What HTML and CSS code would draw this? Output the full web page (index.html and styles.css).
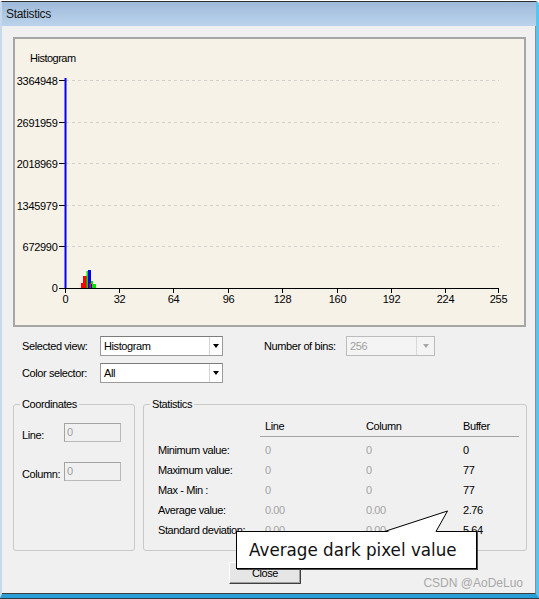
FILE: index.html
```html
<!DOCTYPE html>
<html>
<head>
<meta charset="utf-8">
<title>Statistics</title>
<link rel="stylesheet" href="styles.css">
</head>
<body>
<div class="screen">
  <div class="frame">
    <div class="titlebar">Statistics</div>
    <div class="dialog">
      <div class="chart-panel">
        <svg class="chart" width="509" height="286" viewBox="15 39 509 286">
          <text class="ch-title" x="30" y="62">Histogram</text>
          <g class="grid">
            <line x1="66" y1="80.5" x2="499" y2="80.5"/>
            <line x1="66" y1="122.5" x2="499" y2="122.5"/>
            <line x1="66" y1="163.5" x2="499" y2="163.5"/>
            <line x1="66" y1="205.5" x2="499" y2="205.5"/>
            <line x1="66" y1="246.5" x2="499" y2="246.5"/>
          </g>
          <g class="ticks">
            <line x1="59" y1="80.5" x2="65" y2="80.5"/>
            <line x1="59" y1="122.5" x2="65" y2="122.5"/>
            <line x1="59" y1="163.5" x2="65" y2="163.5"/>
            <line x1="59" y1="205.5" x2="65" y2="205.5"/>
            <line x1="59" y1="246.5" x2="65" y2="246.5"/>
            <line x1="59" y1="288.5" x2="65" y2="288.5"/>
            <line x1="65" y1="288.5" x2="499" y2="288.5"/>
            <line x1="65.5" y1="288" x2="65.5" y2="293"/>
            <line x1="119.5" y1="288" x2="119.5" y2="293"/>
            <line x1="173.5" y1="288" x2="173.5" y2="293"/>
            <line x1="228.5" y1="288" x2="228.5" y2="293"/>
            <line x1="282.5" y1="288" x2="282.5" y2="293"/>
            <line x1="337.5" y1="288" x2="337.5" y2="293"/>
            <line x1="391.5" y1="288" x2="391.5" y2="293"/>
            <line x1="445.5" y1="288" x2="445.5" y2="293"/>
            <line x1="498.5" y1="288" x2="498.5" y2="293"/>
          </g>
          <g class="ylabels">
            <text x="57.5" y="84.5">3364948</text>
            <text x="57.5" y="126.5">2691959</text>
            <text x="57.5" y="167.5">2018969</text>
            <text x="57.5" y="209.5">1345979</text>
            <text x="57.5" y="250.5">672990</text>
            <text x="57.5" y="292">0</text>
          </g>
          <g class="xlabels">
            <text x="65.5" y="303">0</text>
            <text x="119.5" y="303">32</text>
            <text x="173.5" y="303">64</text>
            <text x="228.5" y="303">96</text>
            <text x="282.5" y="303">128</text>
            <text x="337.5" y="303">160</text>
            <text x="391.5" y="303">192</text>
            <text x="445.5" y="303">224</text>
            <text x="498.5" y="303">255</text>
          </g>
          <rect class="bar-b" x="64.5" y="78" width="2" height="210"/>
          <rect class="bar-r" x="81" y="283" width="2" height="5"/>
          <rect class="bar-r" x="83" y="276" width="4" height="12"/>
          <rect class="bar-g" x="86.5" y="271" width="1.5" height="17"/>
          <rect class="bar-b" x="88" y="270" width="3" height="18"/>
          <rect class="bar-r" x="89.5" y="283" width="1.5" height="5"/>
          <rect class="bar-g" x="91" y="281" width="2" height="7"/>
          <rect class="bar-b" x="91" y="284" width="1" height="4"/>
          <rect class="bar-g" x="93" y="284" width="3" height="4"/>
        </svg>
      </div>

      <div class="controls">
        <span class="lbl">Selected view:</span>
        <div class="combo"><span class="combo-text">Histogram</span><span class="combo-btn"><i class="arrow"></i></span></div>
        <span class="spacer"></span>
        <span class="lbl">Number of bins:</span>
        <div class="combo disabled"><span class="combo-text">256</span><span class="combo-btn"><i class="arrow"></i></span></div>
        <span class="lbl">Color selector:</span>
        <div class="combo"><span class="combo-text">All</span><span class="combo-btn"><i class="arrow"></i></span></div>
      </div>

      <div class="groups">
        <fieldset class="group coords">
          <legend>Coordinates</legend>
          <div class="coord-rows">
            <div class="coord-row"><span class="lbl">Line:</span><div class="textbox">0</div></div>
            <div class="coord-row"><span class="lbl">Column:</span><div class="textbox">0</div></div>
          </div>
        </fieldset>
        <fieldset class="group stats">
          <legend>Statistics</legend>
          <div class="stats-grid">
            <span class="hdr blank"></span>
            <span class="hdr">Line</span>
            <span class="hdr">Column</span>
            <span class="hdr">Buffer</span>

            <span class="rl">Minimum value:</span>
            <span class="v dim">0</span>
            <span class="v dim">0</span>
            <span class="v">0</span>

            <span class="rl">Maximum value:</span>
            <span class="v dim">0</span>
            <span class="v dim">0</span>
            <span class="v">77</span>

            <span class="rl">Max - Min :</span>
            <span class="v dim">0</span>
            <span class="v dim">0</span>
            <span class="v">77</span>

            <span class="rl">Average value:</span>
            <span class="v dim">0.00</span>
            <span class="v dim">0.00</span>
            <span class="v">2.76</span>

            <span class="rl">Standard deviation:</span>
            <span class="v dim">0.00</span>
            <span class="v dim">0.00</span>
            <span class="v">5.64</span>
          </div>
        </fieldset>
      </div>

      <div class="buttons"><button class="btn" type="button">Close</button></div>
    </div>
  </div>

  <div class="callout">Average dark pixel value</div>
  <svg class="callout-tail" width="75" height="30" viewBox="380 505 75 30">
    <polygon points="385.5,532.6 447.5,511 435.5,532.6" fill="#fff"/>
    <polyline points="384.5,531.5 447.5,511 436,531.5" fill="none" stroke="#000" stroke-width="1"/>
  </svg>
  <div class="watermark">CSDN @AoDeLuo</div>
</div>
</body>
</html>
```

FILE: styles.css
```css
* { box-sizing: border-box; }

html, body {
  margin: 0;
  padding: 0;
  background: #fff;
}

body {
  font-family: "Liberation Sans", Arial, sans-serif;
  font-size: 11px;
  letter-spacing: -0.4px;
  color: #000;
}

.screen {
  position: relative;
  width: 539px;
  height: 599px;
  padding-top: 1px;
  border-bottom: 1px solid #2d3b46;
  overflow: hidden;
}

.frame {
  height: 597px;
  display: flex;
  flex-direction: column;
  border-top: 1px solid #2e2e2e;
  border-left: 2px solid #c9d9ec;
  border-right: 3px solid #56c5ef;
  border-bottom: 4px solid #2a9fd7;
  border-top-right-radius: 4px;
}

.titlebar {
  flex: none;
  height: 24px;
  line-height: 24px;
  padding-left: 4px;
  background: linear-gradient(#9fbad9, #bbd3ec);
  font-size: 12px;
  letter-spacing: -0.3px;
  color: #141414;
}

.dialog {
  flex: 1;
  background: #f0f0f0;
  border-right: 1px solid #8d8d8d;
  border-bottom: 1px solid #3d3d3d;
  padding: 11px 0 0 11px;
}

/* chart */
.chart-panel {
  width: 513px;
  height: 290px;
  border: 2px solid #a6a6a6;
  background: #f6f2e8;
}

.chart {
  display: block;
}

.chart text {
  font-family: "Liberation Sans", Arial, sans-serif;
  font-size: 11px;
  letter-spacing: -0.3px;
  fill: #000;
}

.chart .ch-title { letter-spacing: -0.5px; }
.chart .ylabels text { text-anchor: end; }
.chart .xlabels text { text-anchor: middle; }

.chart .grid line {
  stroke: #d2d0cb;
  stroke-width: 1;
  stroke-dasharray: 3 3;
  shape-rendering: crispEdges;
}

.chart .ticks line {
  stroke: #000;
  stroke-width: 1;
  shape-rendering: crispEdges;
}

.bar-b { fill: #0000ff; }
.bar-r { fill: #ff0000; }
.bar-g { fill: #00e000; }

/* controls */
.controls {
  display: grid;
  grid-template-columns: 78px 123px 41px 82px 89px;
  grid-template-rows: 20px 20px;
  row-gap: 7px;
  margin: 9px 0 0 9px;
  align-items: center;
}

.lbl {
  white-space: nowrap;
}

.combo {
  display: flex;
  height: 20px;
  background: #fff;
  border: 1px solid #9a9a9a;
  border-top-color: #7c7c7c;
}

.combo-text {
  flex: 1;
  padding-left: 3px;
  line-height: 18px;
}

.combo-btn {
  width: 13px;
  display: flex;
  align-items: center;
  justify-content: center;
  border-left: 1px solid #d4d4d4;
}

.arrow {
  width: 0;
  height: 0;
  border-left: 3.5px solid transparent;
  border-right: 3.5px solid transparent;
  border-top: 4px solid #000;
}

.combo.disabled {
  background: #f4f4f4;
  border-color: #bcbcbc;
}

.combo.disabled .combo-text { color: #a0a0a0; }
.combo.disabled .combo-btn { width: 18px; border-left-color: #d8d8d8; }
.combo.disabled .arrow { border-top-color: #a6a6a6; }

/* group boxes */
.groups {
  display: flex;
  gap: 8px;
  margin-top: 14px;
}

.group {
  margin: 0;
  padding: 0 0 0 6px;
  height: 154px;
  border: 1px solid #c9c9c9;
  border-radius: 3px;
}

.group legend {
  padding: 0 2px;
  line-height: 14px;
}

.coords { width: 122px; }
.stats { width: 384px; }

.coord-rows {
  display: flex;
  flex-direction: column;
  gap: 20px;
  padding: 12px 0 0 2px;
}

.coord-row {
  display: flex;
  height: 19px;
}

.coord-row .lbl {
  width: 42px;
  line-height: 19px;
  padding-top: 3px;
}

.textbox {
  width: 57px;
  height: 19px;
  line-height: 16px;
  padding-left: 2px;
  color: #a0a0a0;
  background: #f0f0f0;
  border: 1px solid #b9b9b9;
  border-top-color: #a2a2a2;
  border-left-color: #a2a2a2;
}

.stats-grid {
  display: grid;
  grid-template-columns: 102px 101px 97px 61px;
  grid-template-rows: 23px;
  grid-auto-rows: 20px;
  padding: 6px 0 0 8px;
}

.hdr {
  height: 20px;
  line-height: 19px;
  padding-left: 5px;
  border-bottom: 1px solid #a4a4a4;
  margin-bottom: 3px;
  align-self: start;
}

.hdr.blank { border-bottom: none; }

.rl {
  line-height: 20px;
  white-space: nowrap;
}

.v {
  line-height: 20px;
  padding-left: 5px;
}

.v.dim { color: #a4a4a4; }

/* button */
.buttons {
  margin: 11px 0 0 216px;
}

.btn {
  display: block;
  width: 72px;
  height: 22px;
  padding: 0;
  font-family: "Liberation Sans", Arial, sans-serif;
  font-size: 11px;
  letter-spacing: -0.4px;
  color: #000;
  background: #e6e6e6;
  border: 1px solid;
  border-color: #fff #404040 #404040 #fff;
  box-shadow: inset -1px -1px 0 #a0a0a0;
}

/* overlays */
.callout {
  position: absolute;
  left: 236px;
  top: 531px;
  width: 241px;
  height: 38px;
  padding-left: 12px;
  background: #fff;
  border: 1px solid #000;
  box-shadow: 1px 1px 0 #4a4a4a;
  font-family: "DejaVu Sans", Verdana, sans-serif;
  font-size: 16.75px;
  letter-spacing: 0;
  line-height: 36px;
  color: #111;
  white-space: nowrap;
}

.callout-tail {
  position: absolute;
  left: 380px;
  top: 505px;
}

.watermark {
  position: absolute;
  right: 16px;
  top: 576px;
  font-size: 12px;
  letter-spacing: 0;
  line-height: 14px;
  color: #a8a8a8;
}
```
